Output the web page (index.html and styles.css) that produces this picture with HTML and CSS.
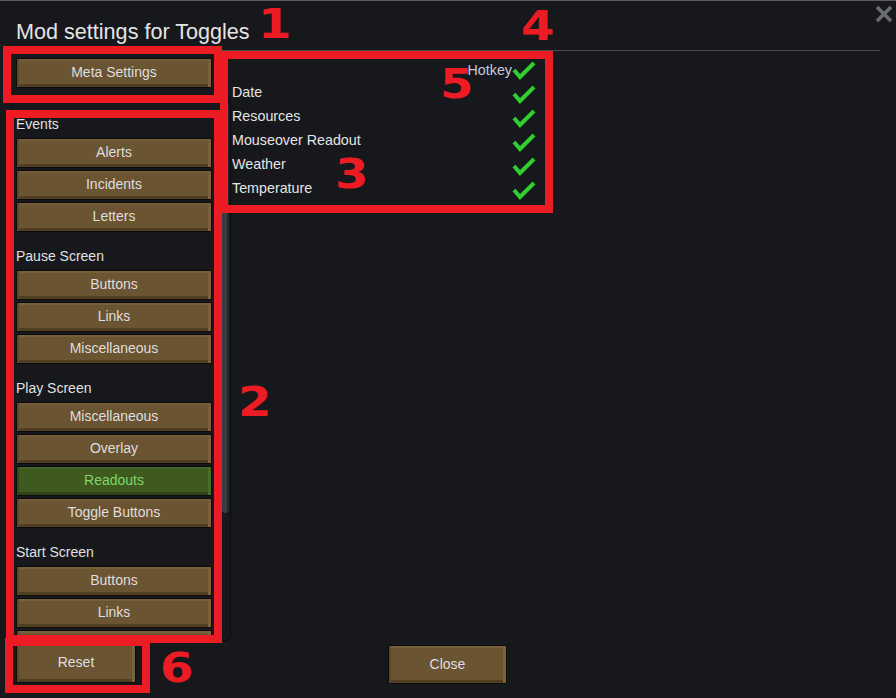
FILE: index.html
```html
<!DOCTYPE html>
<html>
<head>
<meta charset="utf-8">
<link rel="stylesheet" href="styles.css">
</head>
<body>
<div class="window">
  <header class="header">
    <h1 class="title">Mod settings for Toggles</h1>
    <svg class="close-x" width="18" height="18" viewBox="0 0 18 18"><path d="M2 2 L16 16 M16 2 L2 16" stroke="#6a6d72" stroke-width="3.6" fill="none"/></svg>
  </header>
  <div class="rule"></div>
  <div class="main">
    <div class="left">
      <button class="btn meta">Meta Settings</button>
      <div class="frame">
        <div class="list">
          <section class="group">
            <div class="group-label">Events</div>
            <div class="btns">
              <button class="btn">Alerts</button>
              <button class="btn">Incidents</button>
              <button class="btn">Letters</button>
            </div>
          </section>
          <section class="group">
            <div class="group-label">Pause Screen</div>
            <div class="btns">
              <button class="btn">Buttons</button>
              <button class="btn">Links</button>
              <button class="btn">Miscellaneous</button>
            </div>
          </section>
          <section class="group">
            <div class="group-label">Play Screen</div>
            <div class="btns">
              <button class="btn">Miscellaneous</button>
              <button class="btn">Overlay</button>
              <button class="btn active">Readouts</button>
              <button class="btn">Toggle Buttons</button>
            </div>
          </section>
          <section class="group">
            <div class="group-label">Start Screen</div>
            <div class="btns">
              <button class="btn">Buttons</button>
              <button class="btn">Links</button>
              <button class="btn">Miscellaneous</button>
            </div>
          </section>
        </div>
        <div class="scrollbar"></div>
      </div>
    </div>
    <div class="right">
      <div class="row head">
        <span class="hotkey">Hotkey</span>
        <svg class="check" width="24" height="24" viewBox="0 0 24 24"><polyline points="2,12 8,19 22,5" fill="none" stroke="#2fcf2f" stroke-width="4"/></svg>
      </div>
      <div class="row">
        <span class="label">Date</span>
        <svg class="check" width="24" height="24" viewBox="0 0 24 24"><polyline points="2,12 8,19 22,5" fill="none" stroke="#2fcf2f" stroke-width="4"/></svg>
      </div>
      <div class="row">
        <span class="label">Resources</span>
        <svg class="check" width="24" height="24" viewBox="0 0 24 24"><polyline points="2,12 8,19 22,5" fill="none" stroke="#2fcf2f" stroke-width="4"/></svg>
      </div>
      <div class="row">
        <span class="label">Mouseover Readout</span>
        <svg class="check" width="24" height="24" viewBox="0 0 24 24"><polyline points="2,12 8,19 22,5" fill="none" stroke="#2fcf2f" stroke-width="4"/></svg>
      </div>
      <div class="row">
        <span class="label">Weather</span>
        <svg class="check" width="24" height="24" viewBox="0 0 24 24"><polyline points="2,12 8,19 22,5" fill="none" stroke="#2fcf2f" stroke-width="4"/></svg>
      </div>
      <div class="row">
        <span class="label">Temperature</span>
        <svg class="check" width="24" height="24" viewBox="0 0 24 24"><polyline points="2,12 8,19 22,5" fill="none" stroke="#2fcf2f" stroke-width="4"/></svg>
      </div>
    </div>
  </div>
  <footer class="footer">
    <button class="btn reset">Reset</button>
    <button class="btn close">Close</button>
  </footer>

  <div class="note-box nb1"></div>
  <div class="note-box nb2"></div>
  <div class="note-box nb3"></div>
  <div class="note-box nb6"></div>
  <span class="note-num n1">1</span>
  <span class="note-num n2">2</span>
  <span class="note-num n3">3</span>
  <span class="note-num n4">4</span>
  <span class="note-num n5">5</span>
  <span class="note-num n6">6</span>
</div>
</body>
</html>
```
FILE: styles.css
```css
* { box-sizing: border-box; }
html, body { margin: 0; padding: 0; }
body {
  background: #16181c;
  font-family: "Liberation Sans", Arial, sans-serif;
  color: #e2e2e2;
  overflow: hidden;
}
.window {
  position: relative;
  width: 896px;
  height: 698px;
  border-top: 1px solid #575c65;
  overflow: hidden;
}
.header {
  display: flex;
  justify-content: space-between;
  align-items: flex-start;
  height: 49px;
  padding-left: 16px;
}
.title {
  margin: 19px 0 0 0;
  font-size: 21.6px;
  line-height: 24px;
  font-weight: normal;
  color: #e4e4e4;
}
.close-x { margin: 4px 3px 0 0; }
.rule {
  height: 1px;
  margin: 0 16px;
  background: #4a4d53;
}
.main {
  display: flex;
  height: 590px;
}
.left {
  margin-left: 12px;
  width: 219px;
  display: flex;
  flex-direction: column;
}
.btn {
  display: block;
  font-family: "Liberation Sans", Arial, sans-serif;
  font-size: 14px;
  color: #dedede;
  background: #6b5432;
  border: 1px solid #0c0c0c;
  padding: 0 0 2px 0;
  text-align: center;
  box-shadow:
    inset 2px 0 0 #5c4829,
    inset -3px 0 0 #7a613a,
    inset 0 2px 0 #75603a,
    inset 0 -3px 0 #4f3e22;
  cursor: pointer;
}
.meta {
  margin: 7px 0 0 4px;
  width: 196px;
  height: 30px;
}
.frame {
  margin-top: 14px;
  height: 539px;
  border: 1px solid #0b0c0f;
  border-radius: 0 0 6px 0;
  display: flex;
  align-items: flex-start;
  overflow: hidden;
}
.list {
  flex: none;
  width: 199px;
  padding: 11px 0 0 3px;
}
.group { margin-bottom: 14px; }
.group-label {
  font-size: 14px;
  line-height: 20px;
  margin-bottom: 4px;
  color: #e0e0e0;
}
.btns {
  display: flex;
  flex-direction: column;
  gap: 2px;
}
.btns .btn { height: 30px; width: 196px; }
.btn.active {
  background: #3e5a1e;
  color: #7fd66a;
  box-shadow:
    inset 2px 0 0 #324a17,
    inset -3px 0 0 #4a6a26,
    inset 0 2px 0 #46652a,
    inset 0 -3px 0 #2c4213;
}
.scrollbar {
  flex: none;
  margin-left: 10px;
  width: 7px;
  height: 410px;
  background: #393c42;
  border-right: 2px solid #25272b;
  border-radius: 0 0 3px 3px;
}
.right {
  padding: 7px 0 0 1px;
}
.row {
  width: 304px;
  height: 24px;
  display: flex;
  justify-content: space-between;
  align-items: center;
  font-size: 14.3px;
  color: #e4e4e4;
}
.label {
  line-height: 16px;
  padding-bottom: 4px;
}
.row.head { justify-content: flex-end; }
.hotkey { color: #c5cadb; }
.check { display: block; flex: none; }
.footer {
  display: flex;
  align-items: flex-start;
  height: 57px;
}
.reset {
  margin: 2px 0 0 16px;
  width: 120px;
  height: 40px;
}
.close {
  margin: 4px 0 0 252px;
  width: 119px;
  height: 39px;
}

/* annotation overlay */
.note-box {
  position: absolute;
  border: 8px solid #ed1c24;
}
.nb1 { left: 3px; top: 45px; width: 219px; height: 57px; }
.nb2 { left: 6px; top: 109px; width: 216px; height: 533px; }
.nb3 { left: 220px; top: 50px; width: 333px; height: 162px; }
.nb6 { left: 5px; top: 637px; width: 145px; height: 55px; }
.note-num {
  position: absolute;
  font-family: "DejaVu Sans", sans-serif;
  font-weight: bold;
  font-size: 40px;
  line-height: 30px;
  color: #ed1c24;
  transform: scaleX(1.2);
  transform-origin: left top;
}
.n1 { left: 258px; top: 8px; }
.n2 { left: 238px; top: 386px; }
.n3 { left: 335px; top: 158px; }
.n4 { left: 521px; top: 10px; }
.n5 { left: 440px; top: 68px; }
.n6 { left: 160px; top: 652px; }
```
